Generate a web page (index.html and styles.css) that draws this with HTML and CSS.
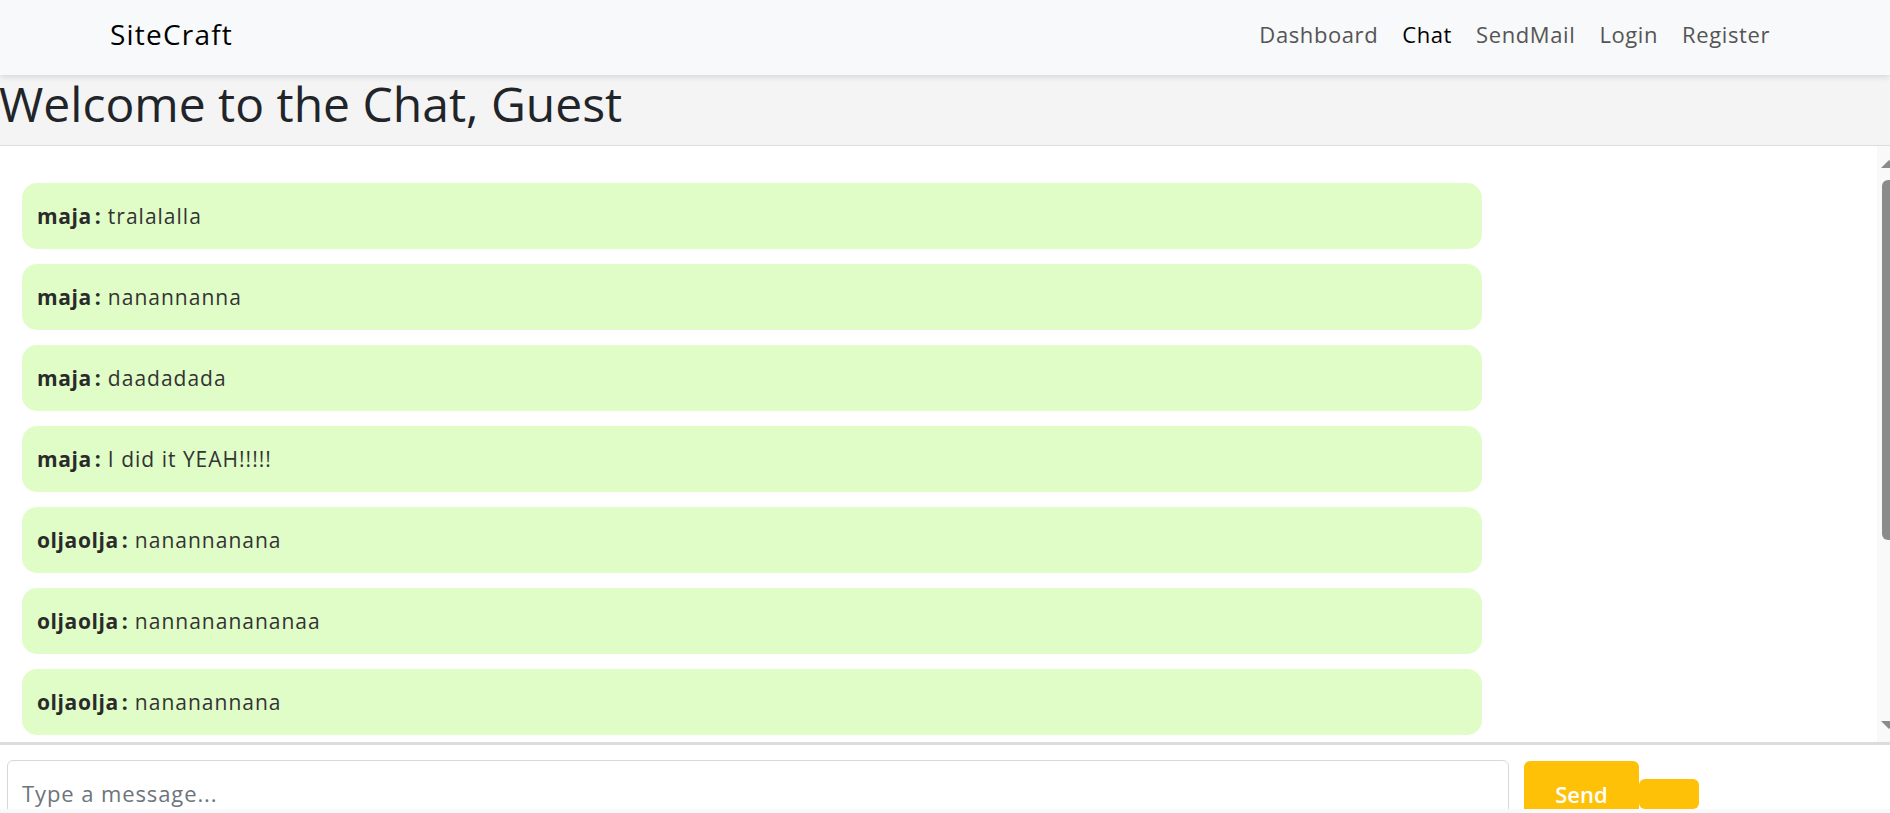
FILE: index.html
```html
<!DOCTYPE html>
<html lang="en">
<head>
<meta charset="utf-8">
<title>SiteCraft - Chat</title>
<link rel="stylesheet" href="styles.css">
</head>
<body>
<nav class="navbar">
  <a class="brand" href="#">SiteCraft</a>
  <ul class="nav-links">
    <li><a href="#">Dashboard</a></li>
    <li><a class="active" href="#">Chat</a></li>
    <li><a href="#">SendMail</a></li>
    <li><a href="#">Login</a></li>
    <li><a href="#">Register</a></li>
  </ul>
</nav>
<header class="page-header">
  <h1>Welcome to the Chat, Guest</h1>
</header>
<section class="chat">
  <div class="messages">
    <div class="message"><strong>maja<span class="colon">:</span></strong>&nbsp;tralalalla</div>
    <div class="message"><strong>maja<span class="colon">:</span></strong>&nbsp;nanannanna</div>
    <div class="message"><strong>maja<span class="colon">:</span></strong>&nbsp;daadadada</div>
    <div class="message"><strong>maja<span class="colon">:</span></strong>&nbsp;I did it YEAH!!!!!</div>
    <div class="message"><strong>oljaolja<span class="colon">:</span></strong>&nbsp;nanannanana</div>
    <div class="message"><strong>oljaolja<span class="colon">:</span></strong>&nbsp;nannananananaa</div>
    <div class="message"><strong>oljaolja<span class="colon">:</span></strong>&nbsp;nananannana</div>
    <div class="message"><strong>oljaolja<span class="colon">:</span></strong>&nbsp;nana</div>
  </div>
  <div class="scrollbar">
    <span class="arrow arrow-up"></span>
    <span class="thumb"></span>
    <span class="spacer"></span>
    <span class="arrow arrow-down"></span>
  </div>
</section>
<form class="composer">
  <input class="msg-input" type="text" placeholder="Type a message...">
  <button class="btn btn-send" type="button">Send</button>
  <button class="btn btn-small" type="button"></button>
</form>
<footer class="footer"></footer>
</body>
</html>
```
FILE: styles.css
```css
* { box-sizing: border-box; }
html, body { height: 100%; }
body {
  margin: 0;
  overflow: hidden;
  font-family: "Open Sans", "Noto Sans", sans-serif;
  background: #ffffff;
  color: #212529;
}
.navbar {
  height: 75px;
  background: #f8f9fa;
  box-shadow: 0 2px 6px rgba(0, 0, 0, 0.12);
  display: flex;
  align-items: center;
  justify-content: space-between;
  padding: 0 120px 8px 110px;
  position: relative;
  z-index: 2;
}
.brand {
  font-size: 28px;
  font-weight: 500;
  color: #000;
  text-decoration: none;
  letter-spacing: 1.2px;
}
.nav-links {
  list-style: none;
  margin: 0;
  padding: 0;
  display: flex;
  gap: 24px;
}
.nav-links a {
  font-size: 22px;
  color: #555;
  text-decoration: none;
  letter-spacing: 0.6px;
}
.nav-links a.active { color: #000; }

.page-header {
  height: 71px;
  background: #f4f4f4;
  border-bottom: 1px solid #dcdcdc;
}
.page-header h1 {
  margin: 0 0 0 -1px;
  font-size: 48px;
  font-weight: 400;
  line-height: 57px;
  color: #212529;
}

.chat {
  height: 596px;
  display: flex;
  background: #fff;
}
.messages {
  flex: 1;
  overflow: hidden;
  padding: 37px 0 0 22px;
}
.message {
  width: 1460px;
  height: 66px;
  margin-bottom: 15px;
  padding: 0 15px;
  background: #e0fdc8;
  border-radius: 15px;
  display: flex;
  align-items: center;
  font-size: 21px;
  letter-spacing: 1px;
  color: #333;
}
.message strong {
  color: #2a2a2a;
  font-weight: 700;
  letter-spacing: 0.6px;
}
.message .colon {
  margin-left: 3px;
}

.scrollbar {
  width: 13px;
  background: #f9f9f9;
  overflow: hidden;
  display: flex;
  flex-direction: column;
  padding-left: 4px;
}
.arrow {
  width: 0;
  height: 0;
  border-left: 8px solid transparent;
  border-right: 8px solid transparent;
  flex: none;
}
.arrow-up {
  margin-top: 14px;
  border-bottom: 8px solid #8b8b8b;
}
.arrow-down {
  margin-bottom: 13px;
  border-top: 8px solid #8b8b8b;
}
.thumb {
  flex: none;
  margin: 12px 0 0 1px;
  width: 16px;
  height: 360px;
  background: #8b8b8b;
  border-radius: 6px;
}
.spacer { flex: 1; }

.composer {
  height: 67px;
  margin: 0;
  border-top: 3px solid #dcdcdc;
  padding: 15px 0 0 7px;
  display: flex;
  align-items: flex-start;
  overflow: hidden;
}
.msg-input {
  width: 1502px;
  height: 66px;
  flex: none;
  border: 1px solid #d8d8d8;
  border-radius: 6px;
  padding: 0 14px;
  font-family: inherit;
  font-size: 22px;
  letter-spacing: 0.9px;
  color: #333;
  outline: none;
}
.msg-input::placeholder { color: #6c757d; }
.btn {
  border: none;
  background: #ffc107;
  color: #fff;
  font-family: inherit;
  flex: none;
  padding: 0;
}
.btn-send {
  margin: 1px 0 0 15px;
  width: 115px;
  height: 70px;
  border-radius: 6px;
  padding-top: 18px;
  font-size: 22px;
  font-weight: 600;
  line-height: 30px;
  display: flex;
  justify-content: center;
  align-items: flex-start;
}
.btn-small {
  margin-top: 19px;
  width: 60px;
  height: 30px;
  border-radius: 6px;
}
.footer {
  height: 20px;
  background: #f8f9fa;
}
```
